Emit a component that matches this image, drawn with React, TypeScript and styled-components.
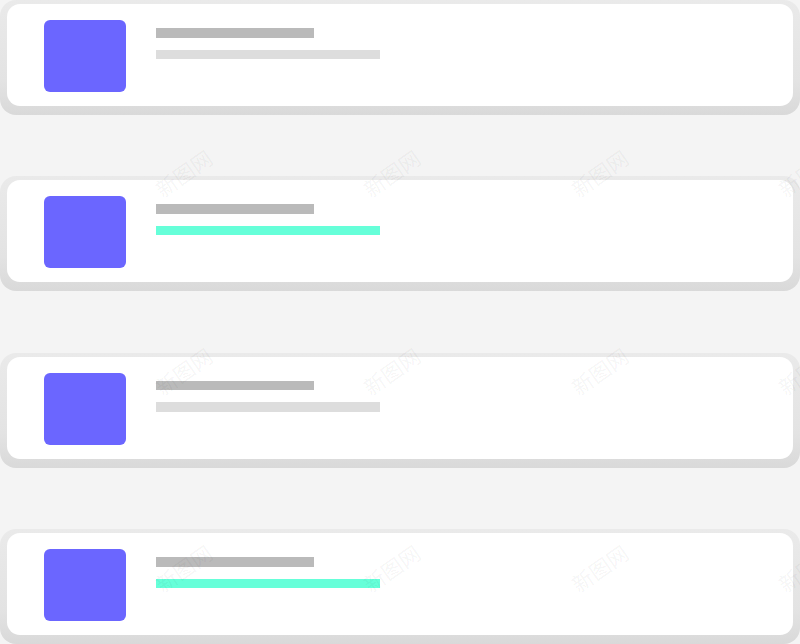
import styled, { createGlobalStyle } from 'styled-components';

const GlobalStyle = createGlobalStyle`
  html, body {
    margin: 0;
    padding: 0;
    background: #f4f4f4;
    font-family: "Noto Sans CJK SC", "Noto Sans", sans-serif;
  }
`;

const Page = styled.div`
  position: relative;
  width: 800px;
  height: 644px;
  overflow: hidden;
  background: #f4f4f4;
  display: flex;
  flex-direction: column;
  gap: 61.5px;
`;

const Frame = styled.div`
  height: 115px;
  box-sizing: border-box;
  padding: 4px 7px 9px;
  border-radius: 16px;
  background: linear-gradient(#eaeaea 0%, #e3e3e3 70%, #d9d9d9 100%);
  display: flex;
`;

const Card = styled.div`
  flex: 1;
  background: #ffffff;
  border-radius: 13px;
  display: flex;
  align-items: flex-start;
  padding: 16px 0 0 37px;
  gap: 30px;
`;

const Thumb = styled.div`
  width: 82px;
  height: 72px;
  border-radius: 6px;
  background: #6b66ff;
  flex-shrink: 0;
`;

const Lines = styled.div`
  display: flex;
  flex-direction: column;
  gap: 12px;
  padding-top: 8px;
`;

const Bar = styled.div<{ $w: number; $c: string }>`
  width: ${(p) => p.$w}px;
  height: 9.5px;
  background: ${(p) => p.$c};
`;

const Mark = styled.span<{ $x: number; $y: number }>`
  position: absolute;
  left: ${(p) => p.$x}px;
  top: ${(p) => p.$y}px;
  font-size: 21px;
  color: rgba(0, 0, 0, 0.05);
  transform: rotate(-35deg);
  pointer-events: none;
  white-space: nowrap;
`;

const rows = [false, true, false, true];
const marks = [
  [152, 158], [360, 158], [568, 158], [775, 158],
  [152, 356], [360, 356], [568, 356], [775, 356],
  [152, 553], [360, 553], [568, 553], [775, 553],
];

const App = () => {
  return (
    <Page>
      <GlobalStyle />
      {rows.map((active, i) => (
        <Frame key={i}>
          <Card>
            <Thumb />
            <Lines>
              <Bar $w={158} $c="#bababa" />
              <Bar $w={224} $c={active ? '#66ffd9' : '#dddddd'} />
            </Lines>
          </Card>
        </Frame>
      ))}
      {marks.map(([x, y], i) => (
        <Mark key={i} $x={x} $y={y}>
          新图网
        </Mark>
      ))}
    </Page>
  );
};

export default App;
